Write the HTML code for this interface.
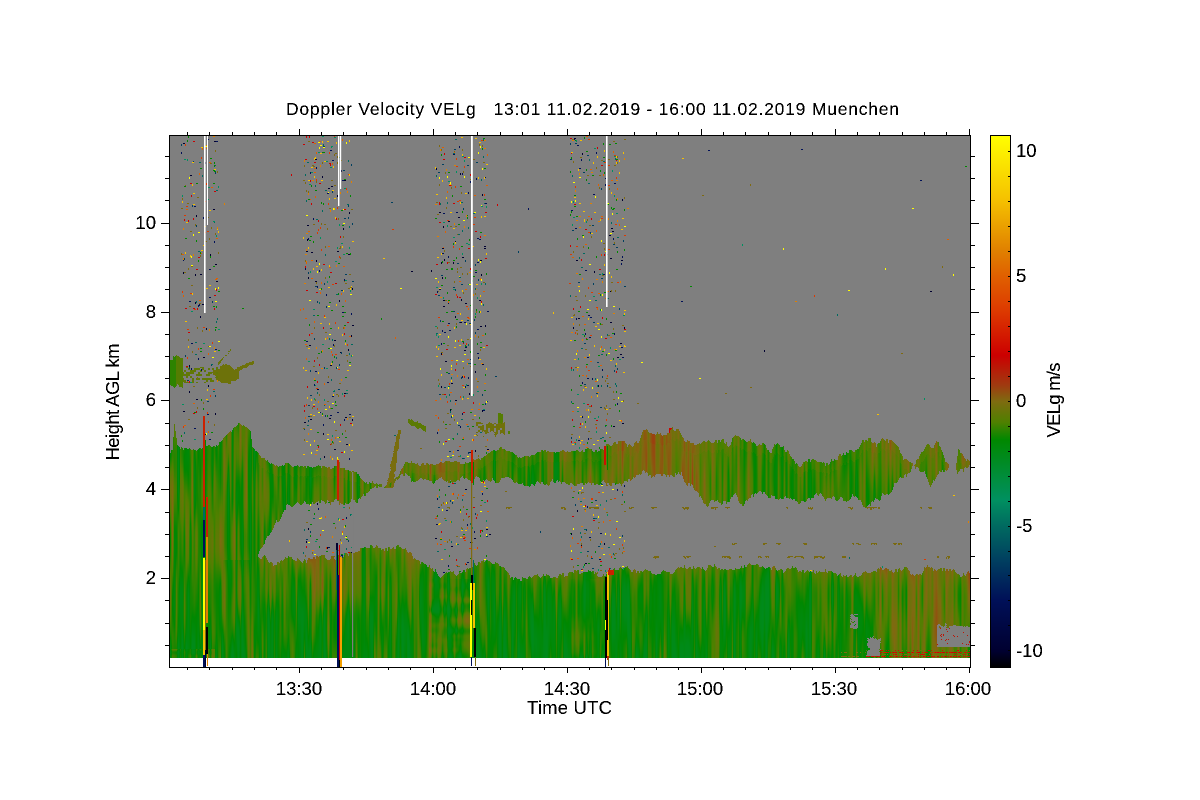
<!DOCTYPE html>
<html><head><meta charset="utf-8"><title>Doppler Velocity</title>
<style>
html,body{margin:0;padding:0;background:#fff;width:1200px;height:800px;overflow:hidden}
#c{position:absolute;left:170px;top:136px;image-rendering:pixelated}
svg{position:absolute;left:0;top:0}
text{font-family:"Liberation Sans",sans-serif;fill:#000}
</style></head><body>
<canvas id="c" width="800" height="531"></canvas>
<svg width="1200" height="800" viewBox="0 0 1200 800" shape-rendering="crispEdges">
<defs><linearGradient id="g" x1="0" y1="0" x2="0" y2="1">
<stop offset="0" stop-color="#ffff00"/><stop offset=".124" stop-color="#f5c000"/><stop offset=".218" stop-color="#e08000"/><stop offset=".265" stop-color="#e06000"/><stop offset=".33" stop-color="#dd3a00"/><stop offset=".414" stop-color="#cc0000"/><stop offset=".47" stop-color="#a03a10"/><stop offset=".5" stop-color="#7f6a10"/><stop offset=".54" stop-color="#4f8000"/><stop offset=".573" stop-color="#008800"/><stop offset=".686" stop-color="#009060"/><stop offset=".735" stop-color="#006a60"/><stop offset=".798" stop-color="#004060"/><stop offset=".874" stop-color="#001058"/><stop offset=".97" stop-color="#000030"/><stop offset="1" stop-color="#000000"/>
</linearGradient>
<filter id="alias" filterUnits="userSpaceOnUse" x="0" y="0" width="1200" height="800" color-interpolation-filters="sRGB"><feComponentTransfer><feFuncA type="discrete" tableValues="0 0 1 1 1"/></feComponentTransfer></filter>
</defs>
<rect x="990" y="135" width="21" height="532" fill="url(#g)"/>
<path id="t" fill="none" stroke="#000" stroke-width="1" d=""/>
<g font-size="18.5" filter="url(#alias)">
<text x="592.5" y="115" text-anchor="middle" font-size="17.5" textLength="613" lengthAdjust="spacing" xml:space="preserve">Doppler Velocity VELg   13:01 11.02.2019 - 16:00 11.02.2019 Muenchen</text>
<text x="299" y="695" text-anchor="middle">13:30</text>
<text x="433" y="695" text-anchor="middle">14:00</text>
<text x="567" y="695" text-anchor="middle">14:30</text>
<text x="700" y="695" text-anchor="middle">15:00</text>
<text x="834" y="695" text-anchor="middle">15:30</text>
<text x="968" y="695" text-anchor="middle">16:00</text>
<text x="569.5" y="714" text-anchor="middle" textLength="85" lengthAdjust="spacing">Time UTC</text>
<text x="156" y="229" text-anchor="end">10</text>
<text x="156" y="318" text-anchor="end">8</text>
<text x="156" y="406" text-anchor="end">6</text>
<text x="156" y="495" text-anchor="end">4</text>
<text x="156" y="584" text-anchor="end">2</text>
<text x="1016" y="157">10</text>
<text x="1016" y="282">5</text>
<text x="1016" y="407">0</text>
<text x="1016" y="532">-5</text>
<text x="1016" y="657">-10</text>
<text transform="translate(119,402) rotate(-90)" text-anchor="middle" textLength="117" lengthAdjust="spacing">Height AGL km</text>
<text transform="translate(1060,400) rotate(-90)" text-anchor="middle" textLength="75" lengthAdjust="spacing">VELg m/s</text>
</g>
</svg>
<script>
(function(){
/* axes */
var d="M169.5 135.5H970.5V667.5H169.5Z M990.5 135.5H1010.5V667.5H990.5Z ";
for(var i=0;i<=35;i++){var x=Math.round(187+i*22.33)+.5;if(x>970)break;var M=(i%6==5);
 var L=M?6:3;d+="M"+x+" 667V"+(667+L)+"M"+x+" 135V"+(135-L);}
for(i=0;i<24;i++){var y=Math.round(156+i*22.22)+.5;if(y>667)break;var M2=((i-3)%4==0);
 d+="M169 "+y+"H"+(M2?161:165)+"M970 "+y+"H"+(M2?979:975);}
for(i=0;i<21;i++){var y2=Math.round(151+i*24.97)+.5;d+="M1008 "+y2+"H1010";}
document.getElementById('t').setAttribute('d',d);

/* noise */
function h(i,j){var s=Math.sin(i*127.1+j*311.7)*43758.5453;return s-Math.floor(s);}
function vn(x,y,sx,sy){var a=x/sx,b=y/sy,i=Math.floor(a),j=Math.floor(b),f=a-i,g=b-j;
 f=f*f*(3-2*f);g=g*g*(3-2*g);
 return (h(i,j)*(1-f)+h(i+1,j)*f)*(1-g)+(h(i,j+1)*(1-f)+h(i+1,j+1)*f)*g;}
function ip(t,x){if(x<=t[0][0])return t[0][1];for(var i=1;i<t.length;i++){if(x<=t[i][0]){var a=t[i-1],b=t[i];return a[1]+(b[1]-a[1])*(x-a[0])/(b[0]-a[0]);}}return t[t.length-1][1];}
function ss(a,b,x){var t=Math.max(0,Math.min(1,(x-a)/(b-a)));return t*t*(3-2*t);}

var stops=[[10.6,255,255,0],[8,245,192,0],[6,224,128,0],[5,224,96,0],[3.6,221,58,0],[1.9,204,0,0],[.8,160,58,16],[0,127,106,16],[-.8,79,128,0],[-1.5,0,136,0],[-4,0,144,96],[-5,0,106,96],[-6.4,0,64,96],[-8,0,16,88],[-10,0,0,48],[-10.6,0,0,0]];
function cm(v){if(v>=10.6)return[255,255,0];for(var i=1;i<stops.length;i++){if(v>=stops[i][0]){var a=stops[i-1],b=stops[i],f=(v-b[0])/(a[0]-b[0]);return[b[1]+(a[1]-b[1])*f,b[2]+(a[2]-b[2])*f,b[3]+(a[3]-b[3])*f];}}return[0,0,0];}

var upTop=[[169,450],[172,450],[174,425],[177,447],[182,449],[200,447],[215,445],[227,433],[238,422],[250,433],[252,447],[263,460],[270,463],[333,465],[345,466],[357,473],[367,482],[380,486],[392,484],[395,477],[405,462],[470,462],[485,455],[500,448],[520,455],[547,450],[560,450],[600,449],[623,443],[635,440],[643,432],[655,437],[670,430],[693,440],[720,443],[740,438],[757,448],[783,447],[800,463],[820,462],[837,457],[863,443],[883,440],[907,457],[913,462],[927,443],[938,443],[948,462],[952,480],[956,462],[958,450],[970,460]];
var upBot=[[257,556],[273,527],[287,507],[303,503],[335,503],[357,500],[370,487],[390,488],[400,473],[417,480],[493,478],[527,483],[560,483],[623,483],[643,472],[677,475],[688,482],[693,493],[703,505],[713,498],[743,500],[760,492],[778,502],[790,493],[805,503],[820,497],[837,503],[850,498],[865,508],[875,495],[880,503],[888,488],[907,478],[913,467],[930,482],[948,467],[952,470],[956,470],[958,470],[970,466]];
var loTop=[[257,558],[270,561],[300,560],[330,556],[345,552],[380,546],[400,548],[420,562],[430,566],[440,572],[465,572],[480,560],[487,558],[500,565],[510,575],[530,578],[560,575],[600,573],[627,568],[660,575],[693,565],[730,567],[760,565],[800,569],[843,575],[880,570],[910,570],[930,568],[970,573]];
var upV=[[258,-1],[400,-.95],[410,-.55],[470,-.5],[490,-1],[560,-.85],[610,-.8],[630,-.45],[660,-.15],[690,-.2],[700,-.7],[730,-1.1],[800,-1.15],[850,-.85],[910,-.65],[970,-.75]];

var W=800,H=531,c=document.getElementById('c'),ctx=c.getContext('2d');
var im=ctx.createImageData(W,H),D=im.data,mask=new Uint8Array(W*H);

function blob(x,y){
 var j=(vn(x,y,3,4)-.5)*6+(h(x,y)-.5)*2;
 if(x<183&&y>358+j&&y<387-j)return -.7-(x<176?.4:0);
 if(x>=183&&x<218&&y>366&&y<383&&h(x>>1,y>>1)>.62)return -.5;
 var e=Math.pow((x-226)/13,2)+Math.pow((y-374)/9,2)*(x>230?1.5:1);
 if(e<1+j*.1)return -.3;
 var t=(x-237)/16;if(t>=0&&t<=1&&Math.abs(y-(369-t*7))<1.6+j*.25)return -.3;
 t=(x-218)/12;if(t>=0&&t<=1&&Math.abs(y-(363-t*13))<1.2&&h(x,y)>.3)return -.4;
 t=(y-430)/57;if(t>=0&&t<=1&&Math.abs(x-(399-t*10))<1.5+t*2+j*.25)return -.1;
 t=(x-408)/17;if(t>=0&&t<=1&&Math.abs(y-(421+t*7))<2.6+j*.4)return -.6;
 if(x>475&&x<505&&y>422+j&&y<433+j&&h(x>>1,y>>1)>.3)return -.25;
 if(x>497&&x<503&&y>413+j*.4&&y<425)return -.7;
 if(x>507&&x<510&&y>430&&y<434)return -.8;
 if(x>668&&x<673&&y>427&&y<438)return 2;
 return null;
}
function noiseF(x,y){return (vn(x,y,2,60)-.5)*1.5+(vn(x+50,y,6,45)-.5)*1.1+(vn(x+90,y,25,50)-.5)*.5+(vn(x+7,y,90,80)-.5)*.3;}
function px(x,y){
 if(y>=658)return null;
 var rough=(vn(x,1,1.5,1)-.5)*5+(vn(x,5,7,1)-.5)*9;
 var jt=rough*(x>600?1:.6),jb=(vn(x,2,1.5,1)-.5)*5+(vn(x,6,7,1)-.5)*(x>680?12:5),jl=(vn(x,3,1.5,1)-.5)*5+(vn(x,7,8,1)-.5)*7;
 var ut=ip(upTop,x)+jt,v,n=noiseF(x,y);
 if(x<258){
  if(y>=ut){
   v=-1.1+n*1.1-.5*ss(540,640,y);
   if(y<560&&x>222&&x<250)v+=.3;
   if(y>648&&x<215)v+=.8*vn(x,y,8,4);
  }else return blob(x,y);
 }else{
  var ub=ip(upBot,x)+jb;
  var lt=ip(loTop,x)+jl;
  if(y>=ut&&y<=ub&&!(x>948&&x<956)){
   v=ip(upV,x)+n*(x>600?.85:1.05)+(y-ut<10?.15:0);
  }else if(y>=lt){
   var hn=vn(x,y,3,3)*6+(h(x,y)-.5)*3;
   if(x>849&&x<858&&y>612+hn*.5&&y<630-hn*.5&&hn>2)return null;
   if(x>866+hn*.6&&x<881-hn*.4&&y>636+hn&&y<656)return null;
   if(x>936&&y>622+hn&&y<647)return h(x,y)>.95?1.5:null;
   v=-1.6+n*1.0+.6*Math.exp(-(y-lt)/16);
   v+=.5*(1-ss(340,400,x))*(1-ss(585,620,y));
   v+=.75*ss(830,880,x);
   if(x>428&&x<472&&y>578)v+=(vn(x+3.3,y+1.7,47,11.3)-.5)*1.1+(vn(x,y,13,5)-.5)*.5+.2;
   if(x>570&&x<604&&y>578)v+=(vn(x+1.3,y+4.7,43,13.1)-.5)*.7;
   if(x>840&&y>648){var q=y%4;if(x>865){if(q==0&&h(x,y)>.3)return 1.5+h(x,y)*1.2; if(q==2&&h(x,y)>.55)return h(x,y+1)>.5?2.2:-.2;}else if(q==0&&h(x,y)>.6)return 0;}
  }else return blob(x,y);
 }
 if(v<-2.1)v=-2.1+(v+2.1)*.3;
 return v;
}
for(var yy=0;yy<H;yy++)for(var xx=0;xx<W;xx++){
 var X=xx+170,Y=yy+136,id=(yy*W+xx)*4,val=(Y<658)?px(X,Y):null,col;
 if(Y>=658){col=[255,255,255];}
 else if(val===null){col=[127,127,127];}
 else{mask[yy*W+xx]=1;col=cm(val);}
 D[id]=col[0];D[id+1]=col[1];D[id+2]=col[2];D[id+3]=255;
}
ctx.putImageData(im,0,0);

/* speckles */
var seed=12345;function R(){seed=(seed*16807)%2147483647;return seed/2147483647;}
var cols=['#ffff00','#f5c000','#e08000','#dd3a00','#cc0000','#000030','#001058','#008800','#009060','#006a60','#7f6a10','#e06000','#004060','#f5c000','#008800','#7f6a10'];
function sp(x,y,cc){
 var xi=x-170|0,yi=y-136|0;if(xi<0||yi<0||xi>=W||yi>=H||y>=658)return;
 if(mask[yi*W+xi])return;
 ctx.fillStyle=cc||cols[R()*cols.length|0];
 var r=R();ctx.fillRect(xi,yi,r<.5?2:1,r>.5?2:1);
}
function band(x0,x1,y0,y1,den){var n=(x1-x0)*(y1-y0)*den;
 for(var i=0;i<n;i++){sp(x0+R()*(x1-x0),y0+R()*(y1-y0));}}
band(181,219,136,300,.024);band(181,219,300,440,.022);
band(303,353,136,460,.03);band(303,353,500,558,.024);
band(435,488,136,462,.03);band(435,488,480,573,.028);
band(570,625,136,448,.028);band(570,625,482,574,.028);
for(i=0;i<110;i++)sp(170+R()*800,136+R()*440);
/* olive dashes */
[[507,620,960,16],[543,710,900,9],[556,640,960,20],[556,250,430,6],[507,430,620,5]].forEach(function(b){
 for(var k=0;k<b[3];k++){var xs=b[1]+R()*(b[2]-b[1]),l=1+R()*5;for(var m=0;m<l;m+=1)sp(xs+m,b[0]+(R()>.8?1:0),'#7a6a10');}});

/* white lines & spikes */
function r(col,x,y0,y1,w){ctx.fillStyle=col;ctx.fillRect(x-170,y0-136,w||1,y1-y0);}
r('#fff',204,136,313,1.6);r('#fff',207,136,225,1);
r('#fff',338,136,206,1.4);r('#fff',340,136,189,1.2);
r('#fff',471,136,396,1.8);
r('#fff',606,136,307,1.6);
/* spike 1 */
r('#cc2000',203,416,507,2);r('#006a60',203,507,520,2);r('#001058',203,520,557,2);
r('#ffff00',203,558,630,2);r('#f5c000',203,630,655,2);r('#001058',203,655,667,2);
r('#008800',205,440,560,1);r('#7f6a10',205,560,650,1);r('#000030',205,650,667,1);
r('#cc2000',206,497,537,2);r('#e08000',206,537,623,2);r('#000',206,627,654,2);r('#e08000',207,654,666,1);
/* spike 2 */
r('#cc2000',337,460,500,2);r('#7f6a10',339,462,505,1);
r('#000030',336,543,575,2);r('#006a60',336,550,590,1);r('#001058',337,575,667,2);
r('#cc0000',339,545,660,1);r('#f5a000',340,557,667,2);r('#000',339,660,667,1);
r('#7f7f7f',352,472,657,1.2);
/* spike 3 */
r('#cc2000',471,450,483,2);r('#7f6a10',471,483,575,1.2);r('#000',471,575,590,2);
r('#ffff00',470,583,628,2);r('#000',471,600,615,1);r('#ffff00',470,628,657,2);r('#001058',471,657,666,1);
r('#008800',473,462,485,1);r('#006a60',473,560,583,1);r('#f5c000',473,583,628,2);r('#000',474,628,657,2);r('#7f6a10',475,657,666,1);
/* spike 4 */
r('#cc1000',604,446,465,2);r('#7f6a10',605,465,483,1);r('#008800',607,446,470,1);
r('#000',605,577,658,2);r('#ffff00',605,620,630,1);r('#f5c000',607,572,660,2);r('#000',607,600,640,1);
r('#cc2000',608,570,575,6);r('#cc2000',607,656,660,2);r('#001058',605,658,667,1);r('#7f6a10',608,658,666,1);
})();
</script>
</body></html>
